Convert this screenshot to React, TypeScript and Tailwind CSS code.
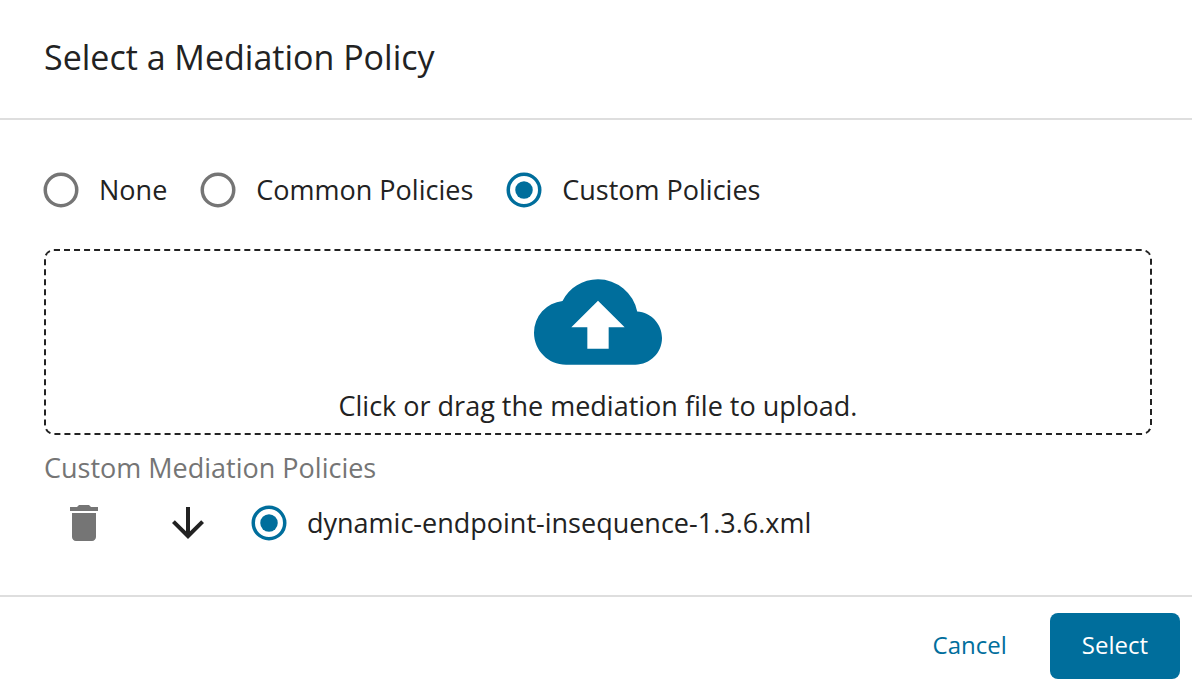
import { useState } from 'react';
import { MdArrowDownward, MdCloudUpload, MdDelete } from 'react-icons/md';

type PolicyKind = 'none' | 'common' | 'custom';

const POLICY_KINDS: { value: PolicyKind; label: string }[] = [
  { value: 'none', label: 'None' },
  { value: 'common', label: 'Common Policies' },
  { value: 'custom', label: 'Custom Policies' },
];

const FILE_NAME = 'dynamic-endpoint-insequence-1.3.6.xml';

interface RadioProps {
  name: string;
  label: string;
  checked: boolean;
  onSelect: () => void;
}

function Radio({ name, label, checked, onSelect }: RadioProps) {
  return (
    <label className="flex cursor-pointer items-center gap-[17px]">
      <span className={checked ? 'relative text-[#006e9c]' : 'relative text-[#757575]'}>
        <input
          type="radio"
          name={name}
          checked={checked}
          onChange={onSelect}
          className="absolute inset-0 size-full cursor-pointer opacity-0"
        />
        <svg viewBox="0 0 24 24" className="size-[42px]" aria-hidden="true">
          <circle cx="12" cy="12" r="9" fill="none" stroke="currentColor" strokeWidth="2" />
          {checked && <circle cx="12" cy="12" r="5" fill="currentColor" />}
        </svg>
      </span>
      <span>{label}</span>
    </label>
  );
}

export default function App() {
  const [kind, setKind] = useState<PolicyKind>('custom');
  const [policy, setPolicy] = useState(FILE_NAME);

  return (
    <div
      role="dialog"
      aria-labelledby="dialog-title"
      className="flex min-h-screen flex-col bg-white font-['Open_Sans',sans-serif] text-[27px] leading-10 text-[#222222]"
    >
      <header className="border-b-2 border-[#dedede] px-11 pt-[31px] pb-[35px]">
        <h1 id="dialog-title" className="text-[34px] leading-[52px]">
          Select a Mediation Policy
        </h1>
      </header>

      <main className="flex-1 pt-[49px] pr-10 pb-10 pl-11">
        <fieldset aria-label="Policy type" className="-ml-1 flex flex-wrap gap-x-[30px]">
          {POLICY_KINDS.map(({ value, label }) => (
            <Radio
              key={value}
              name="policy-kind"
              label={label}
              checked={kind === value}
              onSelect={() => setKind(value)}
            />
          ))}
        </fieldset>

        <label className="mt-[38px] flex cursor-pointer flex-col items-center rounded-[10px] border-2 border-dashed border-[#222222] py-[7px]">
          <input type="file" accept=".xml" className="sr-only" />
          <MdCloudUpload className="size-32 text-[#006e9c]" aria-hidden="true" />
          <span>Click or drag the mediation file to upload.</span>
        </label>

        <h2 className="mt-[13px] text-[#757575]">Custom Mediation Policies</h2>
        <div className="mt-[11px] flex items-center pl-4">
          <button type="button" aria-label="Delete policy" className="text-[#757575]">
            <MdDelete className="size-12" />
          </button>
          <button type="button" aria-label="Download policy" className="ml-14">
            <MdArrowDownward className="size-12" />
          </button>
          <div className="ml-9">
            <Radio
              name="policy-file"
              label={FILE_NAME}
              checked={policy === FILE_NAME}
              onSelect={() => setPolicy(FILE_NAME)}
            />
          </div>
        </div>
      </main>

      <footer className="flex justify-end gap-[11px] border-t-2 border-[#dedede] px-3 pt-4 pb-[15px] text-2xl">
        <button type="button" className="h-[66px] rounded-lg px-8 pb-0.5 text-[#006e9c]">
          Cancel
        </button>
        <button type="button" className="h-[66px] rounded-lg bg-[#006e9c] px-8 pb-0.5 text-white">
          Select
        </button>
      </footer>
    </div>
  );
}
